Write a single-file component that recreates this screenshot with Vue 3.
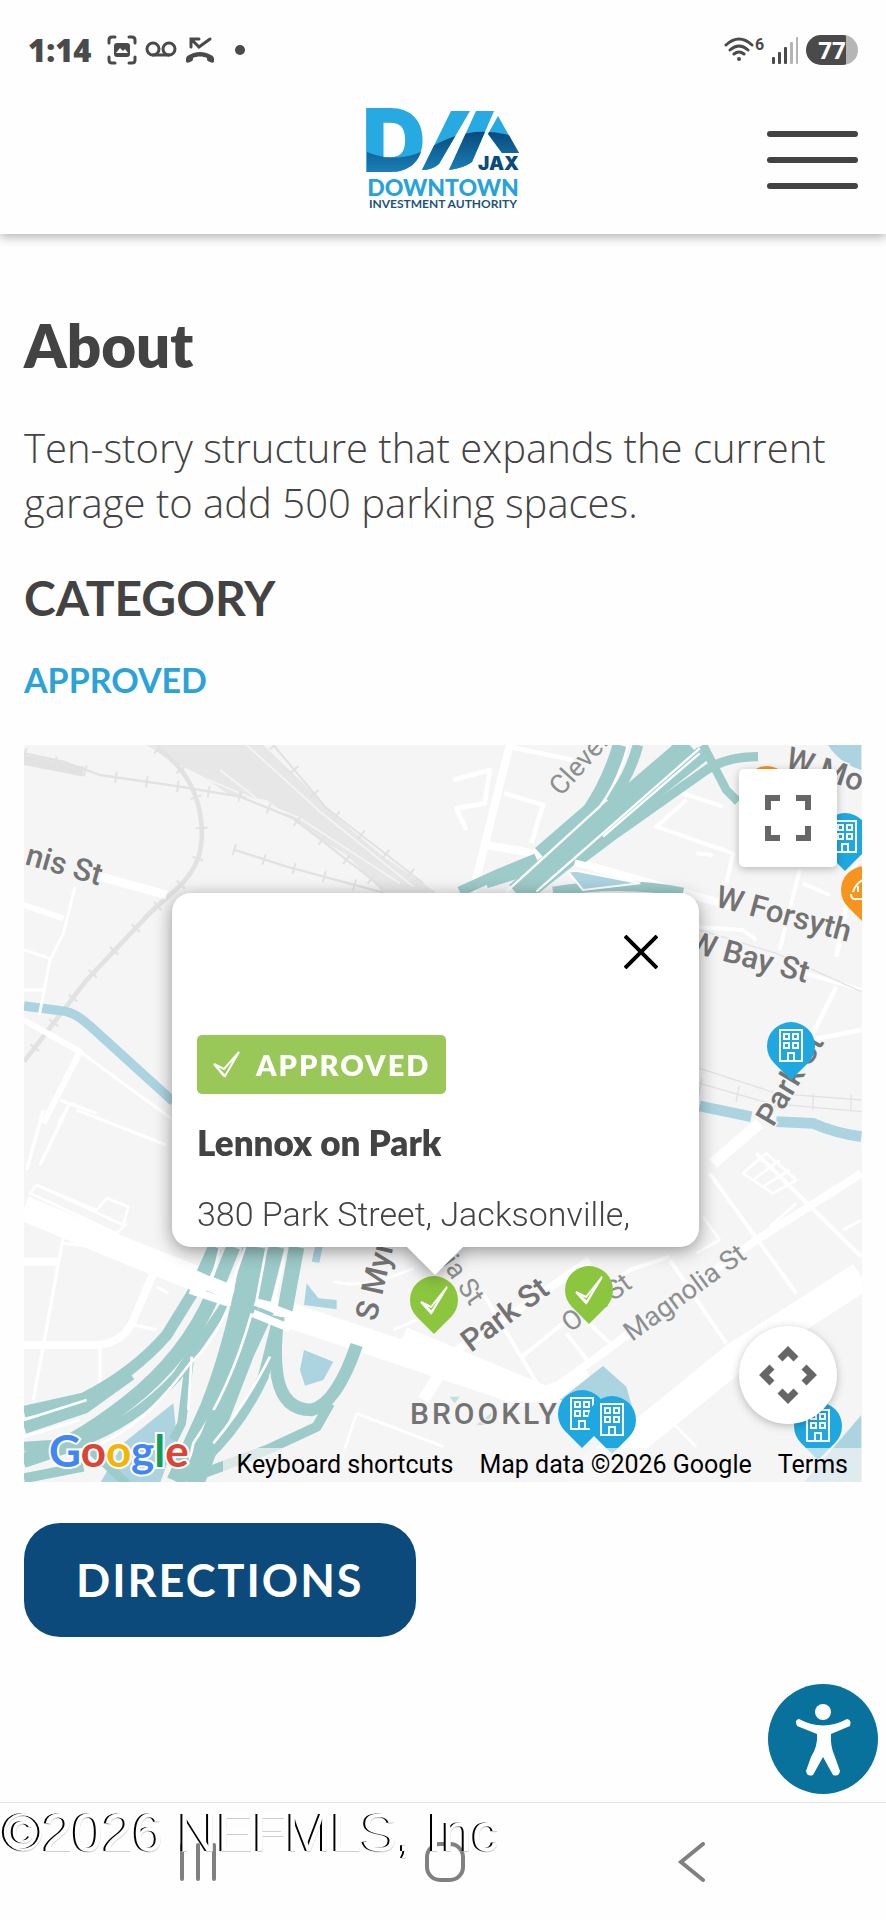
<template>
  <div class="screen">
    <div class="status-bar">
      <div class="status-left">
        <span class="clock">1:14</span>
        <svg width="30" height="30" viewBox="0 0 30 30" aria-hidden="true">
          <path d="M2 8V5q0-3 3-3h3M22 2h3q3 0 3 3v3M28 22v3q0 3-3 3h-3M8 28H5q-3 0-3-3v-3" class="line" />
          <rect x="7" y="8" width="16" height="14" rx="3" fill="#4a4a4a" />
          <path d="M9 18l4-5 3 3 2-2 3 4z" fill="#fff" />
        </svg>
        <svg width="32" height="18" viewBox="0 0 32 18" aria-hidden="true">
          <g class="line">
            <circle cx="8" cy="8" r="6" />
            <circle cx="24" cy="8" r="6" />
            <path d="M8 14h16" />
          </g>
        </svg>
        <svg width="30" height="28" viewBox="0 0 30 28" aria-hidden="true">
          <path d="M6 11V3h8M6 3l8 8L25 3" class="line" />
          <path
            d="M1 23c0-2 1-3 3-4 7-4 15-4 22 0 2 1 3 2 3 4v2c0 2-2 2-4 1-3-1-3-2-3-4-4-2-10-2-14 0 0 2 0 3-3 4-2 1-4 1-4-1z"
            fill="#4a4a4a"
          />
        </svg>
        <span class="dot"></span>
      </div>
      <div class="status-right">
        <svg width="40" height="28" viewBox="0 0 40 28" aria-hidden="true">
          <g fill="none" stroke="#4a4a4a" stroke-width="3" stroke-linecap="round">
            <path d="M2 9q13-12 26 0M6 14q9-8 18 0M10 18q5-4 10 0" />
          </g>
          <circle cx="15" cy="23" r="2" fill="#4a4a4a" />
          <text x="31" y="14" class="wifi-gen">6</text>
        </svg>
        <svg width="26" height="28" viewBox="0 0 26 28" aria-hidden="true">
          <rect
            v-for="(h, i) in [7, 12, 17, 22, 27]"
            :key="h"
            :x="i * 6"
            :y="28 - h"
            width="3"
            :height="h"
            rx="1"
            :fill="i < 3 ? '#4a4a4a' : '#b5b5b5'"
          />
        </svg>
        <span class="battery">77</span>
      </div>
    </div>

    <header class="site-header">
      <a href="#" class="logo" aria-label="Downtown Investment Authority">
        <svg width="152" height="100" viewBox="0 0 152 100">
          <defs>
            <clipPath id="mark">
              <text x="-5" y="62" class="logo-d">D</text>
              <path :d="SLANTS" />
            </clipPath>
            <linearGradient id="wave" x1="0" y1="0" x2="0" y2="1">
              <stop offset="0" stop-color="#0a4a7c" />
              <stop offset="1" stop-color="#1b82ba" />
            </linearGradient>
          </defs>
          <text x="-5" y="62" class="logo-d" fill="#27aae1">D</text>
          <path :d="SLANTS" fill="#27aae1" />
          <path
            d="M0 42C20 50 40 50 62 38S110 14 152 28V64H0z"
            fill="url(#wave)"
            clip-path="url(#mark)"
          />
          <text x="152" y="60" text-anchor="end" class="logo-jax">JAX</text>
          <text x="76" y="86" text-anchor="middle" class="logo-name">DOWNTOWN</text>
          <text x="76" y="98" text-anchor="middle" class="logo-sub">INVESTMENT AUTHORITY</text>
        </svg>
      </a>
      <button class="menu-btn" aria-label="Menu">
        <span></span>
        <span></span>
        <span></span>
      </button>
    </header>

    <main class="content">
      <h1>About</h1>
      <p class="description">
        Ten-story structure that expands the current garage to add 500 parking
        spaces.
      </p>
      <h2>CATEGORY</h2>
      <a href="#" class="category">APPROVED</a>

      <div class="map">
        <svg class="map-canvas" viewBox="0 0 838 737">
          <rect width="838" height="737" fill="#f5f5f5" />
          <g transform="scale(.33333)" fill="none" stroke-linejoin="round">
            <!-- north west -->
            <g transform="translate(-72 -15)">
              <path
                d="M440 15H790L905 125 990 215 1150 350 1310 458H1150L1040 345 940 285 800 180 690 165 600 105 520 65z"
                fill="#e7e7e7"
              />
              <g stroke="#f5f5f5" stroke-width="5">
                <path d="M590 105L900 235 1200 430M660 90L770 175M740 15L960 215 1240 440" />
              </g>
              <g stroke="#e2e2e2">
                <path d="M72 40L190 65 300 105 540 140 720 170 880 235 1150 445" stroke-width="7" />
                <path d="M72 60L250 95" stroke-width="30" />
                <path d="M820 15L980 205 1270 430" stroke-width="6" />
                <path d="M470 25C620 120 620 300 590 365C560 440 470 490 430 540L260 720 72 965" stroke-width="14" />
                <path d="M700 328L860 380 1150 458" stroke-width="7" />
                <g stroke-width="34" stroke-dasharray="6 88">
                  <path d="M72 40L300 105 540 140 720 170 880 235 1150 445" />
                  <path d="M820 15L980 205 1270 430" />
                  <path d="M470 25C620 120 620 300 590 365C560 440 470 490 430 540L260 720 72 965" />
                  <path d="M700 328L860 380 1150 458" />
                </g>
              </g>
              <path d="M72 798L180 812C230 815 260 850 300 885L520 1085" stroke="#abd4e0" stroke-width="28" />
              <g stroke="#fff">
                <path d="M300 410L500 465" stroke-width="26" />
                <path d="M72 495L190 535M72 840L240 935 130 1150" stroke-width="18" />
                <path d="M225 440L190 580 150 660 118 825M72 630L150 655M72 750H130M240 935L520 1140M180 1080L290 1120M210 1090L175 1150" stroke-width="9" />
              </g>
            </g>

            <!-- north east -->
            <g transform="translate(1257 -15)">
              <g stroke="#fff">
                <path d="M200 15L90 455M130 315L300 345M395 365L870 500" stroke-width="24" />
                <path d="M200 20L390 60M185 160L300 195 265 310M30 120L140 90 125 190 40 205 70 270M1180 650L1250 300M1180 740L1100 900 1255 870" stroke-width="14" />
                <path d="M690 150L840 200M730 180L640 260 870 340 850 430M760 340L810 345M1070 390L1010 630M1080 430L1160 465M1070 695L1255 750M750 560L900 570 940 600" stroke-width="12" />
              </g>
              <path d="M1155 15H1255V90Q1190 70 1155 15z" fill="#abd4e0" />
              <g stroke="#9dcbc9">
                <path d="M530 15Q500 120 440 210L290 340" stroke-width="42" />
                <path d="M585 15Q560 110 500 185" stroke-width="32" />
                <path d="M740 15L220 460" stroke-width="66" />
                <path d="M780 40L500 260 250 458" stroke-width="48" />
                <path d="M945 50Q850 50 790 90L520 280 400 370" stroke-width="28" />
                <path d="M780 15L850 150 885 185" stroke-width="26" />
                <path d="M50 455L170 400 280 355M130 430L290 380M330 455Q540 420 720 458" stroke-width="30" />
              </g>
              <path d="M375 395L400 392 590 430 420 450z" fill="#abd4e0" stroke="#fff" stroke-width="6" />
              <g stroke="#fff" stroke-width="7">
                <path d="M555 15Q530 120 470 200L190 455M770 25L280 455M770 40L480 290" />
              </g>
              <path d="M395 368L520 400" stroke="#fff" stroke-width="20" />
              <g stroke="#e2e2e2" stroke-width="4">
                <path d="M770 570L1000 640 1255 755M770 985L1000 1060 1255 1080M770 1030L980 1090 1255 1115" />
                <path d="M770 1040L980 1080 1255 1090" stroke-width="50" stroke-dasharray="4 110" />
              </g>
              <path d="M770 1098L925 1130M1000 1145L1110 1150Q1180 1180 1255 1190" stroke="#abd4e0" stroke-width="32" />
              <path d="M950 1150L810 1270" stroke="#fff" stroke-width="34" />
            </g>

            <!-- south west -->
            <g transform="translate(-72 1095)">
              <g stroke="#fff">
                <path d="M72 295L420 440 600 510 880 620 1090 690 1600 860" stroke-width="76" />
                <path d="M72 705H290Q370 700 400 630L460 490M72 455H180" stroke-width="24" />
                <path d="M190 380L100 870M190 400L280 410M300 700V830M130 0L80 180M200 0L120 165M230 0L500 105M400 645L470 660M470 530L505 550" stroke-width="10" />
                <path d="M110 225L370 345 385 290 320 265 290 300 110 225 90 250 350 370 380 340" stroke-width="8" />
                <path d="M1000 515Q1090 540 1240 475M1180 660L1250 630M1070 910L1020 1060M1070 910L1330 1010" stroke-width="9" />
              </g>
              <g fill="#abd4e0">
                <path d="M920 520L955 565 1010 570V598L912 585zM945 410H968L958 458 935 455z" />
                <path d="M912 720L1000 755 970 810 915 827 900 780z" />
                <path d="M520 880L370 1000 300 1120H480L530 980z" />
              </g>
              <g stroke="#9dcbc9">
                <path d="M645 411L610 490M700 411L660 510" stroke-width="42" />
                <path d="M580 545L500 675Q400 790 250 865L72 905" stroke-width="34" />
                <path d="M640 550Q560 740 380 880T72 1050M390 790L250 890 72 950" stroke-width="44" />
                <path d="M680 580L530 800Q400 940 230 1000L72 1010M72 1105L250 1070" stroke-width="30" />
                <path d="M570 740L545 940 520 990M72 1060L250 1000 380 1120" stroke-width="26" />
                <path d="M770 411Q720 700 640 900L540 1120" stroke-width="84" />
                <path d="M830 411L790 570M890 411L855 600" stroke-width="46" />
                <path d="M800 600L740 730 590 1120" stroke-width="46" />
                <path d="M835 620L790 800Q720 950 610 1050" stroke-width="32" />
                <path d="M835 620Q820 720 832 800 850 900 935 900 1010 880 1070 705" stroke-width="38" />
                <path d="M990 880L950 950 800 1020 610 1090" stroke-width="30" />
              </g>
              <g stroke="#fff" stroke-width="8">
                <path d="M660 411L640 495M735 411L690 540M800 411L770 570M860 411L820 580M690 580Q640 700 570 760 400 990 240 1020" />
                <path d="M755 610Q690 840 580 1000L555 1120M810 740Q740 880 640 1000M575 740L565 900M72 930L260 870M72 980L240 930" />
              </g>
              <g stroke="#fff" stroke-width="24">
                <path d="M575 500L700 550M765 575L880 618" />
                <path d="M570 540L690 580M760 610L870 655" />
              </g>
              <path d="M1320 790L1270 870" stroke="#fff" stroke-width="36" />
              <path d="M545 1120Q600 1020 640 900" stroke="#9dcbc9" stroke-width="20" />
            </g>

            <!-- south east -->
            <g transform="translate(1257 1095)">
              <g stroke="#fff">
                <path d="M1255 500L880 740 560 1000 380 1120" stroke-width="90" />
                <path d="M-120 680L310 860 440 800" stroke-width="60" />
                <path d="M1255 190L940 390 300 860M-20 760L240 590 440 450" stroke-width="24" />
                <path d="M800 190L1060 550M940 130L1255 440M680 450L850 700M120 550L300 850M230 745L560 480 680 440M370 670L440 760M440 640L510 710" stroke-width="12" />
                <path d="M900 190L970 130 1060 210 990 250zM930 210L1010 150M960 230L1040 180M980 350L1060 280M780 320L830 390 760 430M1255 330L1200 360M230 800L290 840M680 930L760 1010M60 0L75 380" stroke-width="8" />
              </g>
              <path d="M480 768L550 830 570 900 350 870z" fill="#abd4e0" />
              <path d="M1255 915L1080 1120H1255z" fill="#abd4e0" />
              <path d="M20 860h30l-15 20zM100 945h30l20-40" fill="#c2e0dc" />
            </g>
          </g>

          <g class="streets">
            <text
              v-for="s in streets"
              :key="s.x"
              :class="{ minor: s.minor }"
              :text-anchor="s.end ? 'end' : 'start'"
              :transform="`translate(${s.x} ${s.y}) rotate(${s.angle})`"
            >
              {{ s.name }}
            </text>
            <text x="386" y="679" class="district">BROOKLYN</text>
          </g>

          <g v-for="p in pins" :key="p.x" :transform="`translate(${p.x} ${p.y})`">
            <path d="M0 0L-17-17A24 24 0 1 1 17-17z" :fill="PIN_COLORS[p.type]" />
            <path
              v-if="p.type === 'approved'"
              d="M-13-32L-3-27 13-47-2-22zM-13-32L-3-21 13-47"
              class="pin-line"
            />
            <g v-else-if="p.type === 'building'" class="pin-line">
              <path d="M-11-50H11V-19H-11zM-3-19V-27H3V-19" />
              <path d="M-7-46h5v5h-5zM2-46h5v5h-5zM-7-37h5v5h-5zM2-37h5v5h-5z" />
            </g>
            <path v-else d="M-14-30Q-14-24-8-25H8M-12-32Q-9-42 0-45M-7-32V-38" class="pin-line" />
          </g>
        </svg>

        <div v-if="infoOpen" class="info-window">
          <div class="info-box">
            <button class="close-btn" aria-label="Close" @click="infoOpen = false">
              <svg width="34" height="34" viewBox="0 0 34 34">
                <path d="M1 1L33 33M33 1L1 33" stroke="#000" stroke-width="4" />
              </svg>
            </button>
            <div class="badge">
              <svg width="27" height="27" viewBox="0 0 27 27" aria-hidden="true">
                <path d="M1 13L11 18 26 1 12 25z M1 13L11 25" class="pin-line" />
              </svg>
              APPROVED
            </div>
            <h3>Lennox on Park</h3>
            <p>380 Park Street, Jacksonville,</p>
          </div>
        </div>

        <button class="map-btn fullscreen" aria-label="Toggle fullscreen view">
          <svg width="46" height="46" viewBox="0 0 46 46">
            <path d="M3 15V3H15M31 3H43V15M43 31V43H31M15 43H3V31" />
          </svg>
        </button>
        <button class="map-btn camera" aria-label="Map camera controls">
          <svg width="58" height="58" viewBox="0 0 58 58">
            <path d="M21 13L29 5 37 13M45 21L53 29 45 37M37 45L29 53 21 45M13 37L5 29 13 21" />
          </svg>
        </button>

        <a href="#" class="google" aria-label="Google">
          <span
            v-for="(l, i) in GOOGLE"
            :key="i"
            :style="{ color: l[1] }"
          >{{ l[0] }}</span>
        </a>
        <div class="attribution">
          <button>Keyboard shortcuts</button>
          <span>Map data ©2026 Google</span>
          <a href="#">Terms</a>
        </div>
      </div>

      <button class="directions">DIRECTIONS</button>
    </main>

    <div class="access-row">
      <button class="access-btn" aria-label="Accessibility options">
        <svg width="110" height="110" viewBox="0 0 110 110">
          <circle cx="55" cy="28" r="8" fill="#fff" />
          <path
            d="M31 35Q55 48 79 35Q84 36 82 42L63 50Q62 62 67 73L72 87Q71 93 65 91L55 73 45 91Q39 93 38 87L43 73Q50 62 49 50L29 42Q26 36 31 35z"
            fill="#fff"
          />
        </svg>
      </button>
    </div>

    <footer class="nav-bar">
      <span class="watermark">©2026 NEFMLS, Inc</span>
      <button aria-label="Recent apps">
        <svg width="40" height="40" viewBox="0 0 40 40">
          <path d="M4 3V37M20 3V37M36 3V37" />
        </svg>
      </button>
      <button aria-label="Home">
        <svg width="40" height="40" viewBox="0 0 40 40">
          <rect x="2" y="2" width="36" height="36" rx="13" />
        </svg>
      </button>
      <button aria-label="Back">
        <svg width="40" height="40" viewBox="0 0 40 40">
          <path d="M31 2L9 20 31 38" />
        </svg>
      </button>
    </footer>
  </div>
</template>

<script setup>
import { ref } from "vue";

const infoOpen = ref(true);

const SLANTS =
  "M84 1H103L72 54Q65 60 55 60zM109 1H127L105 52Q97 58 82 60zM131 6L152 43H135L121 24z";

const PIN_COLORS = {
  approved: "#8cc63f",
  building: "#1fa8e0",
  landmark: "#f7941e",
};

const GOOGLE = [
  ["G", "#4285f4"],
  ["o", "#db4437"],
  ["o", "#f4b400"],
  ["g", "#4285f4"],
  ["l", "#0f9d58"],
  ["e", "#db4437"],
];

const streets = [
  { name: "nis St", x: 0, y: 119, angle: 16 },
  { name: "W Mo", x: 760, y: 22, angle: 18 },
  { name: "W Forsyth", x: 690, y: 161, angle: 15 },
  { name: "W Bay St", x: 782, y: 238, angle: 15, end: true },
  { name: "Park St", x: 749, y: 383, angle: -59 },
  { name: "Park St", x: 447, y: 608, angle: -37 },
  { name: "S Myrtle", x: 352, y: 577, angle: -77 },
  { name: "Cleveland", x: 537, y: 52, angle: -48, minor: true },
  { name: "Oak St", x: 546, y: 588, angle: -36, minor: true },
  { name: "Magnolia St", x: 608, y: 597, angle: -36, minor: true },
  { name: "ia St", x: 417, y: 518, angle: 56, minor: true },
];

const pins = [
  { type: "landmark", x: 743, y: 79 },
  { type: "building", x: 821, y: 126 },
  { type: "landmark", x: 841, y: 179 },
  { type: "building", x: 767, y: 335 },
  { type: "approved", x: 565, y: 579 },
  { type: "approved", x: 410, y: 589 },
  { type: "building", x: 558, y: 703 },
  { type: "building", x: 588, y: 709 },
  { type: "building", x: 794, y: 715 },
];
</script>

<style>
body {
  margin: 0;
  background: #fefefe;
}
</style>

<style scoped>
.screen {
  min-height: 100vh;
  display: flex;
  flex-direction: column;
  color: #434343;
  font-family: Lato, sans-serif;
}
button {
  padding: 0;
  border: none;
  background: none;
  font-family: inherit;
  cursor: pointer;
}
a {
  text-decoration: none;
}
svg {
  display: block;
}

/* status bar */
.status-bar {
  display: flex;
  justify-content: space-between;
  height: 100px;
  padding: 0 28px;
}
.status-left,
.status-right {
  display: flex;
  align-items: center;
  gap: 8px;
}
.clock {
  margin-right: 8px;
  font: 800 31px "Open Sans", sans-serif;
  color: #4a4a4a;
}
.line {
  fill: none;
  stroke: #4a4a4a;
  stroke-width: 3;
  stroke-linecap: round;
}
.dot {
  width: 10px;
  height: 10px;
  margin-left: 12px;
  border-radius: 50%;
  background: #4a4a4a;
}
.wifi-gen {
  font: 700 16px Roboto, sans-serif;
  fill: #4a4a4a;
}
.battery {
  width: 52px;
  height: 30px;
  border-radius: 15px;
  background: linear-gradient(to right, #4a4a4a 77%, #b5b5b5 77%);
  color: #fff;
  font: 700 24px/30px "Open Sans", sans-serif;
  text-align: center;
}

/* header */
.site-header {
  display: grid;
  grid-template-columns: 1fr auto 1fr;
  align-items: center;
  height: 134px;
  padding: 0 28px 14px;
  box-sizing: border-box;
  box-shadow: 0 3px 10px rgba(0, 0, 0, 0.3);
  clip-path: inset(0 0 -20px 0);
}
.logo {
  grid-column: 2;
}
.logo svg {
  overflow: visible;
}
.logo-d {
  font: 900 88px Inter, sans-serif;
}
.logo-jax {
  font: 900 19px Inter, sans-serif;
  fill: #0b4a7d;
}
.logo-name {
  font: 900 23px Lato, sans-serif;
  fill: #27a3d9;
}
.logo-sub {
  font: 700 12px Lato, sans-serif;
  fill: #1d5377;
}
.menu-btn {
  justify-self: end;
  display: flex;
  flex-direction: column;
  gap: 20px;
}
.menu-btn span {
  width: 91px;
  height: 6px;
  border-radius: 3px;
  background: #434343;
}

/* content */
.content {
  padding: 0 24px;
}
h1 {
  margin: 71px 0 0;
  font-size: 60px;
  line-height: 80px;
  font-weight: 800;
}
.description {
  margin: 35px 0 0;
  font-family: "Open Sans", sans-serif;
  font-size: 40px;
  line-height: 55px;
  font-weight: 300;
}
h2 {
  margin: 38px 0 0;
  font-size: 48px;
  line-height: 60px;
  font-weight: 700;
}
.category {
  display: block;
  margin-top: 30px;
  font-size: 34px;
  line-height: 44px;
  font-weight: 700;
  color: #2aa3d8;
}

/* map */
.map {
  position: relative;
  margin-top: 43px;
  overflow: hidden;
  font-family: Roboto, sans-serif;
}
.map-canvas {
  width: 100%;
  height: auto;
}
.streets text {
  font: 500 31px Roboto, sans-serif;
  fill: #737373;
  stroke: #f5f5f5;
  stroke-width: 3px;
  paint-order: stroke;
}
.streets .minor {
  font-size: 27px;
  font-weight: 400;
  fill: #8c8f90;
}
.streets .district {
  font-size: 30px;
  letter-spacing: 3px;
}
.pin-line {
  fill: none;
  stroke: #fff;
  stroke-width: 2;
}
.info-window {
  position: absolute;
  left: 148px;
  top: 148px;
  filter: drop-shadow(0 4px 9px rgba(0, 0, 0, 0.4));
}
.info-window::after {
  content: "";
  display: block;
  width: 56px;
  height: 28px;
  margin-left: 235px;
  background: #fff;
  clip-path: polygon(0 0, 100% 0, 50% 100%);
}
.info-box {
  display: flex;
  flex-direction: column;
  align-items: flex-start;
  width: 527px;
  height: 354px;
  padding: 42px 25px 0;
  box-sizing: border-box;
  border-radius: 19px;
  background: #fff;
  overflow: hidden;
}
.close-btn {
  align-self: flex-end;
  margin-right: 16px;
}
.badge {
  display: flex;
  align-items: center;
  gap: 16px;
  height: 59px;
  margin-top: 66px;
  padding: 0 16px;
  border-radius: 5px;
  background: #99c758;
  color: #fff;
  font: 800 29px Lato, sans-serif;
  letter-spacing: 2px;
}
.info-box h3 {
  margin: 24px 0 0;
  font: 800 35px/48px Lato, sans-serif;
}
.info-box p {
  margin: 24px 0 0;
  font-size: 34px;
  line-height: 48px;
  font-weight: 300;
  white-space: nowrap;
}
.map-btn {
  position: absolute;
  right: 25px;
  display: grid;
  place-items: center;
  width: 98px;
  height: 98px;
  background: #fff;
  box-shadow: 0 2px 8px rgba(0, 0, 0, 0.25);
}
.map-btn path {
  fill: none;
  stroke: #666;
  stroke-width: 6;
}
.fullscreen {
  top: 24px;
  border-radius: 5px;
}
.camera {
  bottom: 58px;
  border-radius: 50%;
}
.camera path {
  stroke-width: 7;
}
.google {
  position: absolute;
  left: 25px;
  bottom: 4px;
  font: 700 44px/56px Lato, sans-serif;
  -webkit-text-stroke: 4px #fff;
  paint-order: stroke fill;
}
.attribution {
  position: absolute;
  right: 0;
  bottom: 0;
  display: flex;
  gap: 26px;
  padding: 0 14px;
  background: rgba(245, 245, 245, 0.7);
  font-size: 25px;
  line-height: 34px;
}
.attribution button,
.attribution a {
  font: inherit;
  color: #000;
}
.attribution span {
  color: #000;
}

.directions {
  display: block;
  margin-top: 41px;
  padding: 0 52px;
  border-radius: 36px;
  background: #0b4a7b;
  color: #fff;
  font-size: 45px;
  font-weight: 700;
  line-height: 114px;
  letter-spacing: 2px;
}

/* bottom */
.access-row {
  display: flex;
  justify-content: flex-end;
  margin-top: auto;
  padding: 0 8px 8px;
}
.access-btn {
  border-radius: 50%;
  background: #08729c;
}
.nav-bar {
  position: relative;
  display: flex;
  justify-content: space-around;
  height: 118px;
  padding: 0 70px 0 74px;
  border-top: 1px solid #e4e4e4;
  box-sizing: border-box;
}
.nav-bar path,
.nav-bar rect {
  fill: none;
  stroke: #808080;
  stroke-width: 4;
  stroke-linecap: round;
}
.watermark {
  position: absolute;
  left: 3px;
  top: 0;
  font: 54px/58px "Liberation Sans", sans-serif;
  color: #fff;
  text-shadow: -2px 0 #000, 0 1px #ccc;
}
</style>
